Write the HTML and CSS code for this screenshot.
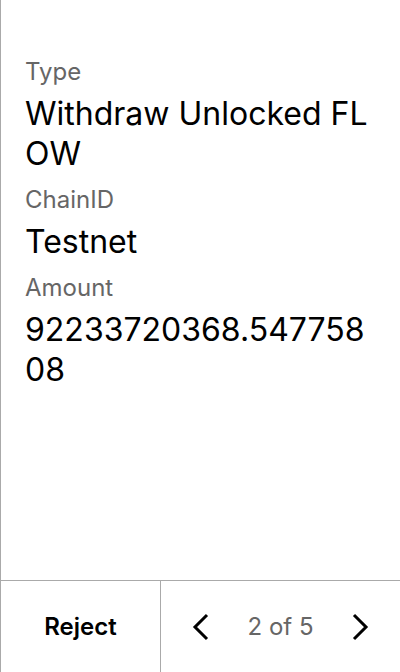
FILE: index.html
```html
<!DOCTYPE html>
<html>
<head>
<meta charset="utf-8">
<link rel="stylesheet" href="styles.css">
</head>
<body>
<div class="screen">
  <main class="content">
    <div class="field">
      <div class="label">Type</div>
      <div class="value">Withdraw Unlocked FLOW</div>
    </div>
    <div class="field">
      <div class="label">ChainID</div>
      <div class="value">Testnet</div>
    </div>
    <div class="field">
      <div class="label">Amount</div>
      <div class="value">92233720368.54775808</div>
    </div>
  </main>
  <footer class="footer">
    <button class="reject">Reject</button>
    <div class="pager">
      <svg class="chev" width="20" height="28" viewBox="0 0 20 28"><path d="M16 2 L4 14 L16 26" fill="none" stroke="#000" stroke-width="3"/></svg>
      <span class="count">2 of 5</span>
      <svg class="chev" width="20" height="28" viewBox="0 0 20 28"><path d="M4 2 L16 14 L4 26" fill="none" stroke="#000" stroke-width="3"/></svg>
    </div>
  </footer>
</div>
</body>
</html>
```
FILE: styles.css
```css
* { box-sizing: border-box; }
html, body { margin: 0; padding: 0; background: #fff; }
body { font-family: Inter, "Noto Sans", sans-serif; }
.screen {
  width: 400px;
  height: 672px;
  display: flex;
  flex-direction: column;
  border-left: 1px solid #aaa;
}
.content {
  flex: 1;
  padding: 57px 24px 0 24px;
  display: flex;
  flex-direction: column;
  gap: 11px;
}
.field { display: flex; flex-direction: column; gap: 7px; }
.label { font-size: 24px; line-height: 30px; color: #666; }
.value {
  font-size: 32px;
  line-height: 40px;
  color: #000;
  word-break: break-all;
}
.footer {
  height: 92px;
  border-top: 1px solid #aaa;
  display: flex;
}
.reject {
  width: 160px;
  border: none;
  border-right: 1px solid #aaa;
  background: #fff;
  font-family: inherit;
  font-size: 24px;
  font-weight: 600;
  color: #000;
  padding: 0;
}
.pager {
  flex: 1;
  display: flex;
  align-items: center;
  justify-content: space-between;
  padding: 0 30px;
}
.count { font-size: 24px; color: #666; }
.chev { display: block; }
```
